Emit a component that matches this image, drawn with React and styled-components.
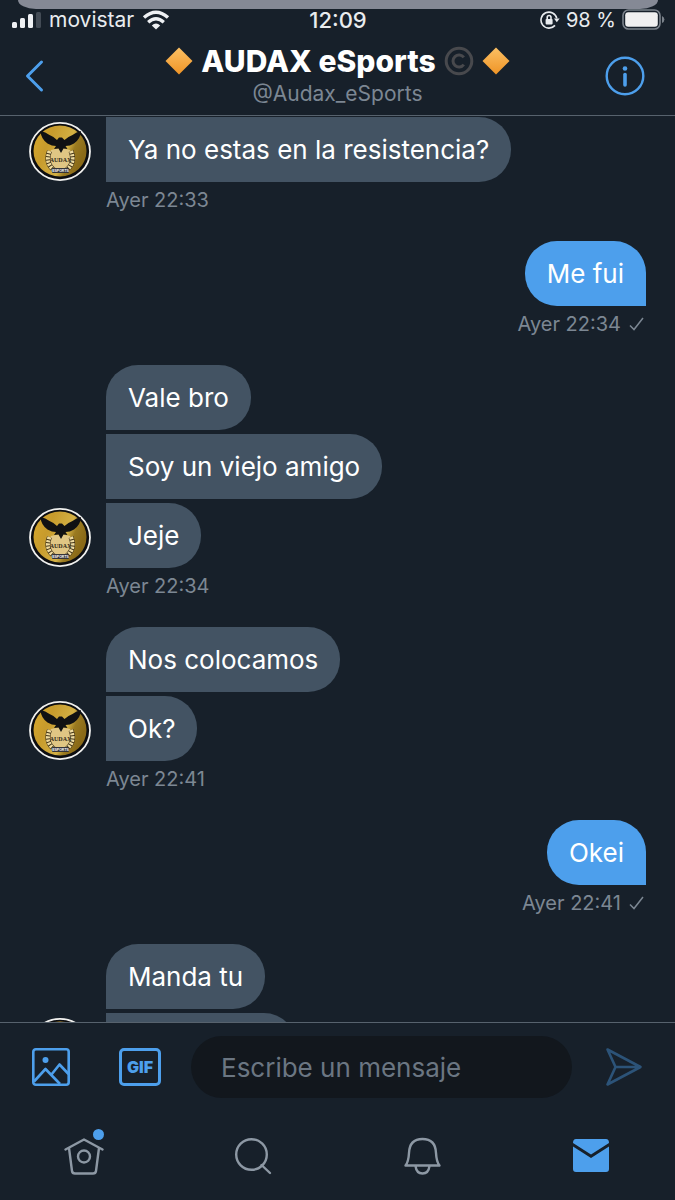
import React from "react";
import styled, { createGlobalStyle } from "styled-components";

const GlobalStyle = createGlobalStyle`
  * { box-sizing: border-box; }
  html, body { margin: 0; background: #17202a; }
  body { font-family: Inter, "Liberation Sans", sans-serif; color: #fff; }
  button, input { font: inherit; color: inherit; }
  svg { display: block; flex: none; }
`;

const Screen = styled.div`
  display: flex;
  flex-direction: column;
  height: 100vh;
  overflow: hidden;
  background: #17202a;
`;

const CallStrip = styled.div`
  flex: none;
  height: 9px;
  margin: 0 17px 0 18px;
  border-radius: 0 0 18px 18px / 0 0 9px 9px;
  background: #858995;
`;

const StatusBar = styled.div`
  flex: none;
  display: grid;
  grid-template-columns: 1fr auto 1fr;
  align-items: center;
  height: 20px;
  padding: 0 10px 0 11px;
  font-size: 20px;
  line-height: 20px;
  color: #e9ecef;
`;

const StatusSide = styled.div`
  display: flex;
  align-items: center;
  justify-content: ${(p) => (p.$end ? "flex-end" : "flex-start")};
  gap: ${(p) => (p.$end ? "6px" : "8px")};
  white-space: nowrap;
`;

const Carrier = styled.span`
  font-size: 21px;
`;

const Clock = styled.time`
  font-size: 22px;
  font-weight: 500;
`;

const Header = styled.header`
  flex: none;
  display: grid;
  grid-template-columns: 53px 1fr 53px;
  align-items: center;
  height: 87px;
  padding: 7px 24px 0;
  border-bottom: 1px solid #57626d;
`;

const IconButton = styled.button`
  display: flex;
  align-items: center;
  justify-content: ${(p) => p.$align || "center"};
  padding: 0;
  border: 0;
  background: none;
  color: ${(p) => p.$color || "#4d9fec"};
  cursor: pointer;
`;

const Title = styled.div`
  text-align: center;
`;

const Name = styled.h1`
  display: flex;
  align-items: center;
  justify-content: center;
  gap: 8px;
  margin: 0;
  font-size: 30px;
  line-height: 36px;
  font-weight: 800;
  white-space: nowrap;
`;

const Handle = styled.p`
  margin: 0;
  font-size: 21px;
  line-height: 30px;
  color: #7c8793;
`;

const Thread = styled.main`
  flex: 1;
  min-height: 0;
  overflow: hidden;
  padding: 1px 29px 0;
`;

const Group = styled.section`
  display: grid;
  grid-template-columns: ${(p) => (p.$mine ? "1fr" : "62px 1fr")};
  column-gap: 15px;
  margin-bottom: 29px;
`;

const AvatarSlot = styled.div`
  display: flex;
  align-items: flex-end;
  padding-bottom: 1px;
`;

const Stack = styled.div`
  display: flex;
  flex-direction: column;
  align-items: ${(p) => (p.$mine ? "flex-end" : "flex-start")};
  gap: 4px;
`;

const Bubble = styled.p`
  margin: 0;
  height: 65px;
  min-width: ${(p) => (p.$wide ? "190px" : "0")};
  padding: 0 22px;
  font-size: 26px;
  line-height: 65px;
  color: #fff;
  background: ${(p) => (p.$mine ? "#4d9fec" : "#435363")};
  border-radius: ${(p) =>
    p.$mine ? "32px 32px 0 32px" : p.$first ? "32px 32px 32px 0" : "0 32px 32px 0"};
`;

const Meta = styled.div`
  grid-column: ${(p) => (p.$mine ? "1" : "2")};
  display: flex;
  align-items: center;
  justify-content: ${(p) => (p.$mine ? "flex-end" : "flex-start")};
  gap: 8px;
  margin-top: 6px;
  padding-right: 2px;
  font-size: 20px;
  line-height: 24px;
  color: #7c8793;
`;

const Composer = styled.form`
  flex: none;
  display: grid;
  grid-template-columns: auto 1fr 41px;
  column-gap: 30px;
  align-items: center;
  padding: 13px 32px 12px 31px;
  border-top: 1px solid #57626d;
`;

const Attachments = styled.div`
  display: flex;
  align-items: center;
  gap: 48px;
`;

const GifButton = styled(IconButton)`
  width: 42px;
  height: 38px;
  border: 3px solid #4d9fec;
  border-radius: 5px;
  font-size: 16px;
  line-height: 16px;
  font-weight: 900;
`;

const MessageInput = styled.input`
  width: 100%;
  min-width: 0;
  height: 62px;
  padding: 0 30px;
  border: 0;
  border-radius: 31px;
  outline: none;
  background: #12171d;
  font-size: 26px;
  color: #fff;
  &::placeholder { color: #6b7682; opacity: 1; }
`;

const Tabs = styled.nav`
  flex: none;
  display: grid;
  grid-template-columns: repeat(4, 1fr);
  align-items: center;
  height: 90px;
  padding-top: 2px;
`;

const Tab = styled.a`
  position: relative;
  display: flex;
  justify-content: center;
  color: ${(p) => (p.$active ? "#4d9fec" : "#8d98a4")};
`;

const NewDot = styled.span`
  position: absolute;
  top: -7px;
  left: calc(50% + 9px);
  width: 11px;
  height: 11px;
  border-radius: 50%;
  background: #4d9fec;
`;

const Signal = () => (
  <svg width="30" height="16" viewBox="0 0 30 16" fill="#eef0f3">
    <rect x="1" y="10" width="5" height="6" rx="1.5" />
    <rect x="9" y="6" width="5" height="10" rx="1.5" />
    <rect x="17" y="2" width="5" height="14" rx="1.5" />
    <rect x="25" y="0" width="5" height="16" rx="1.5" fill="#434b55" />
  </svg>
);

const Wifi = () => (
  <svg width="28" height="20" viewBox="0 0 28 20" fill="none" stroke="#eef0f3" strokeWidth="3.4">
    <path d="M2 7.6Q14-3 26 7.600" />
    <path d="M6.200 12.200Q14 5.400 21.800 12.200" />
    <path d="M9.800 15.400Q14 11.800 18.200 15.400L14 19.600Z" fill="#eef0f3" stroke="none" />
  </svg>
);

const RotationLock = () => (
  <svg width="20" height="20" viewBox="0 0 20 20" fill="none" stroke="#e9ecef" strokeWidth="1.6">
    <path d="M15 15.400A8 8 0 1 1 16.800 8.400" />
    <path d="M14 8.400h5.600l-2.800 3.800Z" fill="#e9ecef" stroke="none" />
    <rect x="5.600" y="9" width="7" height="5.400" rx=".8" fill="#e9ecef" stroke="none" />
    <path d="M7.200 9V7.400a1.900 1.900 0 0 1 3.800 0V9" />
  </svg>
);

const Battery = () => (
  <svg width="43" height="21" viewBox="0 0 43 21">
    <rect x="1" y="1" width="37" height="19" rx="5.5" fill="none" stroke="#7b828b" strokeWidth="1.6" />
    <rect x="3.200" y="3.200" width="32.600" height="14.600" rx="3" fill="#f0f0f0" />
    <path d="M40 7q2.400 1 2.400 3.500T40 14Z" fill="#7b828b" />
  </svg>
);

const Diamond = () => (
  <svg width="28" height="28" viewBox="0 0 28 28">
    <defs>
      <linearGradient id="amber" x1="0" y1="0" x2="0" y2="1">
        <stop offset="0" stopColor="#fbc064" />
        <stop offset="1" stopColor="#ef9426" />
      </linearGradient>
    </defs>
    <path d="M14 .5 27.500 14 14 27.500.5 14Z" fill="url(#amber)" />
  </svg>
);

const Copyright = () => (
  <svg width="30" height="30" viewBox="0 0 30 30" fill="none" stroke="#48494d" strokeWidth="3">
    <circle cx="15" cy="15" r="12.800" />
    <path d="M19.800 11.400a6 6 0 1 0 0 7.200" />
  </svg>
);

const Avatar = ({ lettered }) => (
  <svg width="62" height="60" viewBox="0 0 62 60" role="img" aria-label="AUDAX eSports">
    <defs>
      <linearGradient id="gold" x1="0" y1="0" x2="1" y2=".4">
        <stop offset="0" stopColor="#d9a92c" />
        <stop offset=".35" stopColor="#c79b2c" />
        <stop offset=".7" stopColor="#d3b044" />
        <stop offset=".82" stopColor="#9a7a20" />
        <stop offset="1" stopColor="#8a6a18" />
      </linearGradient>
    </defs>
    <ellipse cx="31" cy="30.500" rx="30" ry="28.600" fill="#0c0d10" stroke="#f1f1ef" strokeWidth="1.800" />
    <ellipse cx="31" cy="30" rx="26.500" ry="25.500" fill="url(#gold)" />
    <path d="M22 29q9-3 19 0 4 9 0 17-4 4-9.500 6-5.500-2-9.500-6-4-8 0-17Z" fill="#e0c684" />
    <path d="M20.500 30q-5 13 6 20M42 30q5 13-6 20" fill="none" stroke="#3f3216" strokeWidth="5" />
    <path d="M20.500 30q-5 13 6 20M42 30q5 13-6 20" fill="none" stroke="#f0dca0" strokeWidth="4" strokeDasharray="2.200 1" />
    <path d="M11.500 10q5 1 9 4 5 2 7.500 5l2-2.500 3 0 2.500 2.500q3-3 8-5 4-3 8.500-4-.5 8-7 12.500-4 2.500-8.500 2.500l2 3-4-.5-2.500 4.500-2.500-4.500-4.500.5 2-3q-4 0-8.500-2.500Q12 18 11.500 10Z" fill="#101113" />
    {lettered && (
      <>
        <text x="31.500" y="41" textAnchor="middle" fontFamily="Liberation Serif" fontWeight="700" fontSize="6" fill="#2e2615">AUDAX</text>
        <rect x="23" y="47" width="17" height="5" rx="1" fill="#34343a" />
        <text x="31.500" y="51" textAnchor="middle" fontFamily="Liberation Sans" fontWeight="700" fontSize="3.500" fill="#fff">ESPORTS</text>
      </>
    )}
  </svg>
);

const Check = () => (
  <svg width="15" height="14" viewBox="0 0 15 14" fill="none" stroke="#7c8793" strokeWidth="1.500">
    <path d="M1 8.500 5 12.500 14 1" />
  </svg>
);

const thread = [
  { mine: false, continued: true, texts: ["Ya no estas en la resistencia?"], time: "Ayer 22:33" },
  { mine: true, texts: ["Me fui"], time: "Ayer 22:34" },
  { mine: false, texts: ["Vale bro", "Soy un viejo amigo", "Jeje"], time: "Ayer 22:34" },
  { mine: false, texts: ["Nos colocamos", "Ok?"], time: "Ayer 22:41" },
  { mine: true, texts: ["Okei"], time: "Ayer 22:41" },
  { mine: false, texts: ["Manda tu", ""] },
];

export default function App() {
  return (
    <Screen>
      <GlobalStyle />
      <CallStrip />
      <StatusBar>
        <StatusSide>
          <Signal />
          <Carrier>movistar</Carrier>
          <Wifi />
        </StatusSide>
        <Clock>12:09</Clock>
        <StatusSide $end>
          <RotationLock />
          <span>98 %</span>
          <Battery />
        </StatusSide>
      </StatusBar>
      <Header>
        <IconButton aria-label="Volver" $align="flex-start">
          <svg width="24" height="34" viewBox="0 0 24 34" fill="none" stroke="currentColor" strokeWidth="3" strokeLinecap="round" strokeLinejoin="round">
            <path d="M17.500 3 3.500 17 17.500 31" />
          </svg>
        </IconButton>
        <Title>
          <Name>
            <Diamond />
            <span>AUDAX eSports</span>
            <Copyright />
            <Diamond />
          </Name>
          <Handle>@Audax_eSports</Handle>
        </Title>
        <IconButton aria-label="Información">
          <svg width="40" height="40" viewBox="0 0 40 40" fill="none" stroke="currentColor" strokeWidth="2.400">
            <circle cx="20" cy="20" r="18.300" />
            <circle cx="20" cy="12.500" r="2.300" fill="currentColor" stroke="none" />
            <path d="M20 18.500v10.500" strokeWidth="3.600" strokeLinecap="round" />
          </svg>
        </IconButton>
      </Header>

      <Thread>
        {thread.map((group, i) => (
          <Group key={i} $mine={group.mine}>
            {!group.mine && (
              <AvatarSlot>
                <Avatar lettered={Boolean(group.time)} />
              </AvatarSlot>
            )}
            <Stack $mine={group.mine}>
              {group.texts.map((text, j) => (
                <Bubble key={j} $mine={group.mine} $first={j === 0 && !group.continued} $wide={!text}>
                  {text}
                </Bubble>
              ))}
            </Stack>
            {group.time && (
              <Meta $mine={group.mine}>
                <time>{group.time}</time>
                {group.mine && <Check />}
              </Meta>
            )}
          </Group>
        ))}
      </Thread>

      <Composer onSubmit={(e) => e.preventDefault()}>
        <Attachments>
          <IconButton type="button" aria-label="Añadir foto">
            <svg width="40" height="40" viewBox="0 0 40 40" fill="none" stroke="currentColor" strokeWidth="2.600" strokeLinejoin="round">
              <rect x="2.300" y="2.300" width="35.400" height="35.400" rx="2.500" />
              <circle cx="14.500" cy="13" r="3" fill="currentColor" stroke="none" />
              <path d="M3 34.500 14.500 22 29 37M20.500 27.500 28.500 17.500 37.500 27" />
            </svg>
          </IconButton>
          <GifButton type="button">GIF</GifButton>
        </Attachments>
        <MessageInput aria-label="Mensaje" placeholder="Escribe un mensaje" />
        <IconButton aria-label="Enviar" $color="#2c5378" $align="flex-end">
          <svg width="38" height="40" viewBox="0 0 38 40" fill="none" stroke="currentColor" strokeWidth="2.600" strokeLinejoin="round">
            <path d="M2.500 2.500 35.500 20 2.500 37.500 10.500 20ZM10.500 20H35" />
          </svg>
        </IconButton>
      </Composer>

      <Tabs>
        <Tab href="#inicio" aria-label="Inicio">
          <svg width="40" height="40" viewBox="0 0 40 40" fill="none" stroke="currentColor" strokeWidth="2.400" strokeLinecap="round" strokeLinejoin="round">
            <path d="M1.500 13.500 20 3.500 38.500 13.500M5 12 8 35q.3 2.500 3 2.500h18q2.700 0 3-2.500L35 12" />
            <circle cx="20" cy="20.500" r="6" />
          </svg>
          <NewDot />
        </Tab>
        <Tab href="#buscar" aria-label="Buscar">
          <svg width="40" height="40" viewBox="0 0 40 40" fill="none" stroke="currentColor" strokeWidth="2.400" strokeLinecap="round">
            <circle cx="18.500" cy="18.500" r="15.300" />
            <path d="m28.500 29 8.500 8" />
          </svg>
        </Tab>
        <Tab href="#notificaciones" aria-label="Notificaciones">
          <svg width="40" height="40" viewBox="0 0 40 40" fill="none" stroke="currentColor" strokeWidth="2.400" strokeLinecap="round" strokeLinejoin="round">
            <path d="M3.500 29.500Q6.500 26 7 17 7.500 3 20.500 3T34 17q.500 9 3.500 12.500ZM13.500 30q1 7.500 7 7.500t7-7.500" />
          </svg>
        </Tab>
        <Tab href="#mensajes" aria-label="Mensajes" $active>
          <svg width="38" height="34" viewBox="0 0 38 34" fill="currentColor">
            <path d="M4 0h30q3 0 3 4L19 15.500 1 4q0-4 3-4ZM1 7.500 19 19 37 7.500V30q0 3-3 3H4q-3 0-3-3Z" />
          </svg>
        </Tab>
      </Tabs>
    </Screen>
  );
}
